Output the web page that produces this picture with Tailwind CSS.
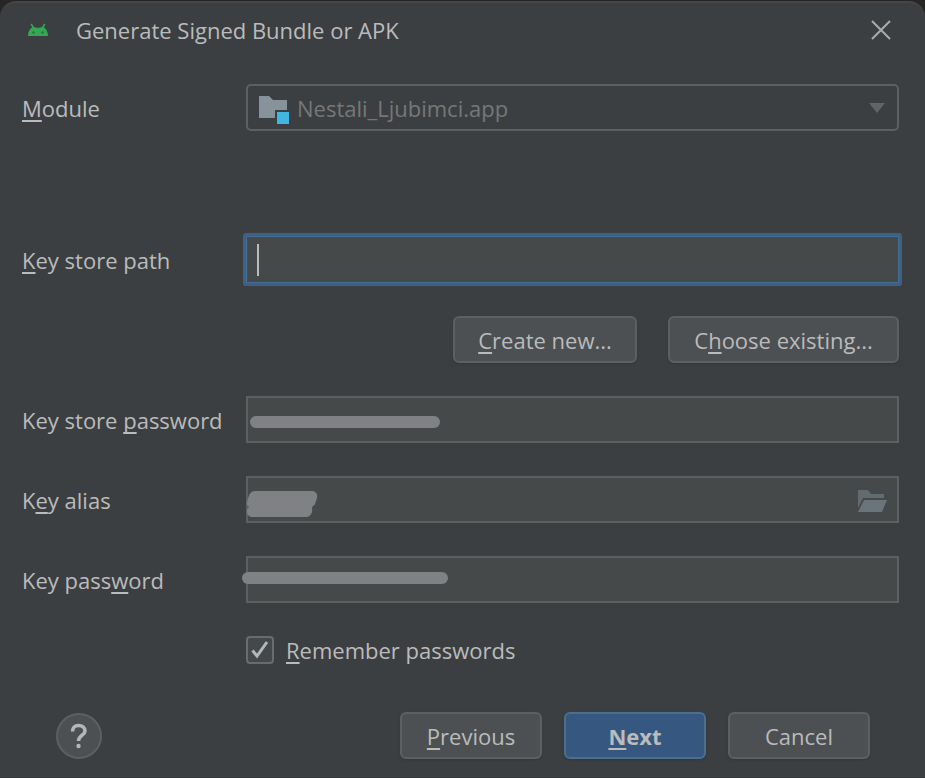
<!DOCTYPE html>
<html lang="en">
<head>
<meta charset="utf-8">
<meta name="viewport" content="width=device-width, initial-scale=1">
<title>Generate Signed Bundle or APK</title>
<script src="https://cdn.jsdelivr.net/npm/@tailwindcss/browser@4"></script>
</head>
<body class="min-h-screen bg-[#262626] pt-px">
<main class="flex min-h-[calc(100vh-1px)] flex-col rounded-t-2xl border-t-2 border-b border-t-[#464544] border-b-[#333639] bg-[#3c3f41] font-['Open_Sans','Noto_Sans',sans-serif] text-[22px] leading-8 text-[#bbbbbb]">
  <header class="flex h-[54px] items-center pr-[33px] pl-7">
    <svg class="h-5 w-5" viewBox="0 0 20 20" aria-hidden="true">
      <path d="M3.500 4.500l2 3.500M16.500 4.500l-2 3.500" stroke="#34a853" stroke-width="1.600" stroke-linecap="round"/>
      <path d="M0 16C0 11.500 2.500 7 6 7C8 8 12 8 14 7C17.500 7 20 11.500 20 16Z" fill="#34a853"/>
      <circle cx="5.500" cy="12.500" r="1.200" fill="#2e6b43"/><circle cx="14.500" cy="12.500" r="1.200" fill="#2e6b43"/>
    </svg>
    <h1 class="ml-7 flex-1">Generate Signed Bundle or APK</h1>
    <button type="button" aria-label="Close" class="flex h-[22px] w-[22px] items-center justify-center">
      <svg class="h-[22px] w-[22px]" viewBox="0 0 22 22" fill="none" stroke="#a9abac" stroke-width="2"><path d="M2 2l18 18M20 2L2 20"/></svg>
    </button>
  </header>

  <form class="flex flex-1 flex-col">
    <div class="grid grid-cols-[224px_1fr] items-center gap-y-[33px] pt-[27px] pr-[26px] pl-[22px]">
      <label for="module"><span class="underline decoration-2 underline-offset-3">M</span>odule</label>
      <div class="relative">
        <select id="module" disabled class="block h-[47px] w-full appearance-none rounded-[5px] border-2 border-[#5e6060] bg-[#3c3f41] pr-12 pl-[49px] text-[#777777] opacity-100"><option>Nestali_Ljubimci.app</option></select>
        <svg class="pointer-events-none absolute top-3 left-3 h-7 w-8" viewBox="0 0 32 28" aria-hidden="true">
          <path d="M1 0h10l4 4h14v10H17v8H1z" fill="#87939a"/><rect x="19" y="16" width="12" height="12" fill="#40b6e0"/>
        </svg>
        <svg class="pointer-events-none absolute top-[19px] right-[14px] h-[10px] w-4" viewBox="0 0 16 10" aria-hidden="true"><path d="M0 0h16L8 10z" fill="#616365"/></svg>
      </div>

      <label for="path" class="mt-[72px]"><span class="underline decoration-2 underline-offset-3">K</span>ey store path</label>
      <div class="relative mt-[72px]">
        <input id="path" type="text" class="block h-[47px] w-full rounded-[1px] border border-[#466d94] bg-[#45494a] px-3 ring-3 ring-[#3d6185] outline-none">
        <span class="pointer-events-none absolute top-2 left-[11px] h-8 w-[2px] bg-[#bbbbbb]"></span>
      </div>

      <div class="col-span-2 flex justify-end gap-[31px]">
        <button type="button" class="h-[47px] w-[184px] rounded-md border-2 border-[#5e6060] bg-[#4c5052] pt-px shadow-sm"><span class="underline decoration-2 underline-offset-3">C</span>reate new...</button>
        <button type="button" class="h-[47px] w-[231px] rounded-md border-2 border-[#5e6060] bg-[#4c5052] pt-px shadow-sm">C<span class="underline decoration-2 underline-offset-3">h</span>oose existing...</button>
      </div>

      <label for="store-password">Key store <span class="underline decoration-2 underline-offset-3 [text-decoration-skip-ink:none]">p</span>assword</label>
      <div class="relative">
        <input id="store-password" type="password" class="block h-[47px] w-full border-2 border-[#5e6060] bg-[#45494a] px-3">
        <span class="pointer-events-none absolute top-5 left-1 h-3 w-[190px] rounded-full bg-[#808184]"></span>
      </div>

      <label for="alias">K<span class="underline decoration-2 underline-offset-3">e</span>y alias</label>
      <div class="relative">
        <input id="alias" type="text" class="block h-[47px] w-full border-2 border-[#5e6060] bg-[#45494a] pr-12 pl-3">
        <svg class="pointer-events-none absolute top-[15px] left-0 h-[26px] w-[72px]" viewBox="0 0 72 26" aria-hidden="true">
          <path d="M9 0H65C70 0 72 3 71 7L69 13C68 15 66 15 66 17C67 22 64 26 60 26H7C3 26 1 24 1 20C1 18 2 17 3 16C0 14 1 11 2 8C3 3 5 0 9 0Z" fill="#808184"/>
        </svg>
        <button type="button" aria-label="Choose key alias" class="absolute top-[14px] right-3 h-[22px] w-[30px]">
          <svg class="h-[22px] w-[30px]" viewBox="0 0 30 22"><path d="M1 0h10l3 4h13v4H6L1 18z" fill="#626b6f"/><path d="M7 10h23l-5 12H1z" fill="#69757a"/></svg>
        </button>
      </div>

      <label for="key-password">Key pass<span class="underline decoration-2 underline-offset-3">w</span>ord</label>
      <div class="relative">
        <input id="key-password" type="password" class="block h-[47px] w-full border-2 border-[#5e6060] bg-[#45494a] px-3">
        <span class="pointer-events-none absolute top-4 -left-1 h-3 w-[206px] rounded-full bg-[#808184]"></span>
      </div>

      <div class="col-start-2 flex h-7 items-center gap-3">
        <div class="relative h-7 w-7">
          <input id="remember" type="checkbox" checked class="block h-7 w-7 appearance-none rounded-[4px] border-2 border-[#6b6b6b] bg-[#43494a]">
          <svg class="pointer-events-none absolute inset-0 h-7 w-7" viewBox="0 0 28 28" fill="none" stroke="#b5b6b7" stroke-width="3" aria-hidden="true"><path d="M6.500 14.500l4.500 5.500L21 6"/></svg>
        </div>
        <label for="remember"><span class="underline decoration-2 underline-offset-3">R</span>emember passwords</label>
      </div>
    </div>

    <footer class="mt-auto flex items-center gap-[22px] pr-[55px] pb-[18px] pl-14">
      <button type="button" aria-label="Help" class="mr-auto h-[46px] w-[46px] rounded-full border-2 border-[#5e6060] bg-[#4c5052]">
        <svg class="mx-auto h-7 w-5" viewBox="0 0 20 28" fill="none" aria-hidden="true"><path d="M3.500 9.500C3.500 5.500 6 3.500 9.500 3.500S16 5.500 16 9C16 13 9.500 13.500 9.500 19" stroke="#b5b6b7" stroke-width="3.600"/><circle cx="9.500" cy="24" r="2.200" fill="#b5b6b7"/></svg>
      </button>
      <button type="button" class="h-[47px] w-[142px] rounded-md border-2 border-[#5e6060] bg-[#4c5052] shadow-sm"><span class="underline decoration-2 underline-offset-3">P</span>revious</button>
      <button type="submit" class="h-[47px] w-[142px] rounded-md border-2 border-[#4c708c] bg-[#365880] font-bold shadow-sm"><span class="underline decoration-2 underline-offset-3">N</span>ext</button>
      <button type="button" class="h-[47px] w-[142px] rounded-md border-2 border-[#5e6060] bg-[#4c5052] shadow-sm">Cancel</button>
    </footer>
  </form>
</main>
</body>
</html>
